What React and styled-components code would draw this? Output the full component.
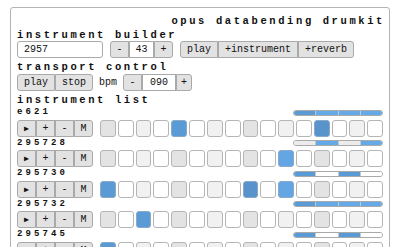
import React from "react";
import styled, { createGlobalStyle } from "styled-components";

const GlobalStyle = createGlobalStyle`
  html, body {
    margin: 0;
    padding: 0;
    background: #fff;
  }
  body {
    font-family: "Liberation Mono", "Courier New", monospace;
    color: #111;
  }
`;

const Page = styled.div`
  padding: 7px 10px 0 10px;
  width: 380px;
`;

const Panel = styled.div`
  border: 1px solid #b4b4b4;
  border-radius: 3px;
  padding: 7px 6px 20px 6px;
`;

const Title = styled.div`
  font-weight: bold;
  font-size: 10.5px;
  letter-spacing: 2.6px;
  line-height: 12px;
  text-align: right;
  margin-right: -2px;
`;

const Heading = styled.div`
  font-weight: bold;
  font-size: 10.5px;
  letter-spacing: 2.6px;
  line-height: 12px;
  height: 12px;
  margin-top: ${(p) => p.$mt || 0}px;
`;

const Row = styled.div`
  display: flex;
  align-items: center;
  gap: ${(p) => p.$gap || 7}px;
  height: 17px;
  margin-top: ${(p) => p.$mt || 0}px;
`;

const TextInput = styled.div`
  box-sizing: border-box;
  width: 86px;
  height: 17px;
  border: 1px solid #a9a9a9;
  border-radius: 3px;
  font-size: 10px;
  line-height: 15px;
  padding-left: 6px;
  background: #fff;
`;

const Group = styled.div`
  display: inline-flex;
  height: 17px;
  & > * + * {
    border-left: none;
  }
  & > *:first-child {
    border-radius: 3px 0 0 3px;
  }
  & > *:last-child {
    border-radius: 0 3px 3px 0;
  }
`;

const Btn = styled.div`
  box-sizing: border-box;
  height: 17px;
  ${(p) => (p.$w ? `width: ${p.$w}px;` : "padding: 0 6px;")}
  border: 1px solid #a9a9a9;
  background: #e2e2e2;
  font-size: 10px;
  line-height: 15px;
  text-align: center;
  white-space: nowrap;
`;

const Value = styled.div`
  box-sizing: border-box;
  height: 17px;
  width: ${(p) => p.$w}px;
  border: 1px solid #a9a9a9;
  background: #fff;
  font-size: 10px;
  line-height: 15px;
  text-align: center;
`;

const Plain = styled.span`
  font-size: 10px;
  line-height: 17px;
`;

const Track = styled.div``;

const TrackHead = styled.div`
  display: flex;
  justify-content: space-between;
  align-items: center;
  height: 13.5px;
`;

const TrackName = styled.div`
  font-weight: bold;
  font-size: 9px;
  letter-spacing: 3.1px;
  line-height: 13.5px;
`;

const Bar = styled.div`
  display: flex;
  width: 90px;
  height: 6px;
  box-sizing: border-box;
  border: 1px solid #a9a9a9;
  border-radius: 3px;
  overflow: hidden;
`;

const segColors = {
  a: "#5b9bd5",
  c: "#64aae8",
  g: "#ececec",
  w: "#ffffff",
};

const Seg = styled.div`
  flex: 1;
  background: ${(p) => segColors[p.$c]};
  & + & {
    border-left: 1px solid ${(p) => (p.$c === "a" || p.$c === "c" ? "#4f86b8" : "#c8c8c8")};
  }
`;

const TrackRow = styled.div`
  display: flex;
  align-items: center;
  gap: 7px;
  height: 17px;
`;

const Cells = styled.div`
  flex: 1;
  display: flex;
  gap: 2px;
  height: 17px;
`;

const cellColors = {
  a: "#5b9bd5",
  b: "#5894cb",
  c: "#63a6e3",
};

const Cell = styled.div`
  flex: 1;
  box-sizing: border-box;
  border: 1px solid ${(p) => (p.$on ? "#8aa9c6" : "#b5b5b5")};
  border-radius: 3px;
  background: ${(p) =>
    p.$on
      ? cellColors[p.$on]
      : p.$i % 4 === 0
      ? "#e3e3e3"
      : p.$i % 2 === 0
      ? "#f1f1f1"
      : "#ffffff"};
`;

const Tri = styled.span`
  font-size: 8px;
`;

const tracks = [
  { name: "e621", bar: ["a", "c", "c", "c"], cells: { 4: "a", 12: "b" } },
  { name: "295728", bar: ["g", "c", "g", "c"], cells: { 10: "c" } },
  { name: "295730", bar: ["a", "w", "a", "w"], cells: { 0: "a", 8: "b", 10: "c" } },
  { name: "295732", bar: ["a", "c", "c", "c"], cells: { 2: "a" } },
  { name: "295745", bar: ["a", "w", "a", "w"], cells: { 0: "a" } },
];

const App = () => {
  return (
    <Page>
      <GlobalStyle />
      <Panel>
        <Title>opus databending drumkit</Title>
        <Heading $mt={2}>instrument builder</Heading>
        <Row>
          <TextInput>2957</TextInput>
          <Group>
            <Btn $w={19}>-</Btn>
            <Value $w={25}>43</Value>
            <Btn $w={19}>+</Btn>
          </Group>
          <Group>
            <Btn>play</Btn>
            <Btn>+instrument</Btn>
            <Btn>+reverb</Btn>
          </Group>
        </Row>
        <Heading $mt={3}>transport control</Heading>
        <Row $gap={6} $mt={1}>
          <Group>
            <Btn>play</Btn>
            <Btn>stop</Btn>
          </Group>
          <Plain>bpm</Plain>
          <Group>
            <Btn $w={19}>-</Btn>
            <Value $w={34}>090</Value>
            <Btn $w={16}>+</Btn>
          </Group>
        </Row>
        <Heading $mt={3}>instrument list</Heading>
        {tracks.map((t) => (
          <Track key={t.name}>
            <TrackHead>
              <TrackName>{t.name}</TrackName>
              <Bar>
                {t.bar.map((c, i) => (
                  <Seg key={i} $c={c} />
                ))}
              </Bar>
            </TrackHead>
            <TrackRow>
              <Group>
                <Btn $w={19}>
                  <Tri>▶</Tri>
                </Btn>
                <Btn $w={19}>+</Btn>
                <Btn $w={19}>-</Btn>
                <Btn $w={19}>M</Btn>
              </Group>
              <Cells>
                {Array.from({ length: 16 }, (_, i) => (
                  <Cell key={i} $i={i} $on={t.cells[i]} />
                ))}
              </Cells>
            </TrackRow>
          </Track>
        ))}
      </Panel>
    </Page>
  );
};

export default App;
